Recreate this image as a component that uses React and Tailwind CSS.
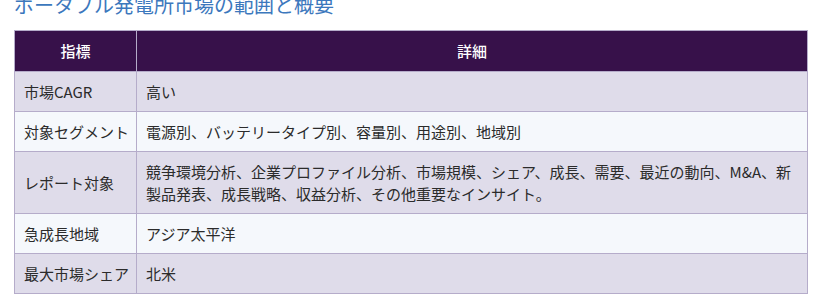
const rows = [
  ['市場CAGR', '高い'],
  ['対象セグメント', '電源別、バッテリータイプ別、容量別、用途別、地域別'],
  ['レポート対象', '競争環境分析、企業プロファイル分析、市場規模、シェア、成長、需要、最近の動向、M&A、新製品発表、成長戦略、収益分析、その他重要なインサイト。'],
  ['急成長地域', 'アジア太平洋'],
  ['最大市場シェア', '北米'],
];

export default function App() {
  return (
    <div className="w-[814px] h-[295px] overflow-hidden bg-white font-['Noto_Sans_CJK_JP','Noto_Sans',sans-serif]">
      <div className="px-[14px]">
        <h2 className="text-[20px] leading-[26px] -mt-[8px] text-[#3c78bd] font-normal">
          ポータブル発電所市場の範囲と概要
        </h2>
        <table className="mt-[12px] w-[794px] border-collapse text-[15px] leading-[22px] text-[#2b2b2b]">
          <thead>
            <tr className="bg-[#37114a] text-white">
              <th className="w-[122px] border border-[#b5acca] h-[41px] font-medium text-center">指標</th>
              <th className="border border-[#b5acca] font-medium text-center">詳細</th>
            </tr>
          </thead>
          <tbody>
            {rows.map(([k, v], i) => (
              <tr key={k} className={i % 2 === 0 ? 'bg-[#dfdcea]' : 'bg-[#f5f8fc]'}>
                <td className="border border-[#b5acca] pl-[9px] pr-1 pt-[9px] pb-[8px] align-middle">{k}</td>
                <td className="border border-[#b5acca] pl-[9px] pr-[10px] pt-[9px] pb-[8px]">{v}</td>
              </tr>
            ))}
          </tbody>
        </table>
      </div>
    </div>
  );
}
